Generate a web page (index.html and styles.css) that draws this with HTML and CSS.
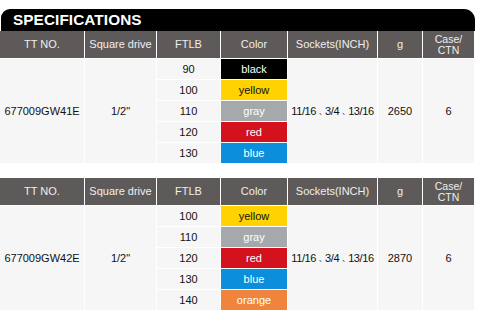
FILE: index.html
```html
<!DOCTYPE html>
<html>
<head>
<meta charset="utf-8">
<link rel="stylesheet" href="styles.css">
</head>
<body>
<div class="page">
  <div class="title">SPECIFICATIONS</div>
  <div class="spec">
    <div class="hd">TT NO.</div>
    <div class="hd">Square drive</div>
    <div class="hd">FTLB</div>
    <div class="hd">Color</div>
    <div class="hd">Sockets(INCH)</div>
    <div class="hd">g</div>
    <div class="hd two">Case/<br>CTN</div>

    <div class="cell span c1">677009GW41E</div>
    <div class="cell span c2">1/2"</div>
    <div class="cell span c5">11/16<span class="sep">、</span>3/4<span class="sep">、</span>13/16</div>
    <div class="cell span c6">2650</div>
    <div class="cell span c7">6</div>

    <div class="cell c3">90</div><div class="clr black">black</div>
    <div class="cell c3">100</div><div class="clr yellow">yellow</div>
    <div class="cell c3">110</div><div class="clr gray">gray</div>
    <div class="cell c3">120</div><div class="clr red">red</div>
    <div class="cell c3">130</div><div class="clr blue">blue</div>
  </div>

  <div class="spec second">
    <div class="hd">TT NO.</div>
    <div class="hd">Square drive</div>
    <div class="hd">FTLB</div>
    <div class="hd">Color</div>
    <div class="hd">Sockets(INCH)</div>
    <div class="hd">g</div>
    <div class="hd two">Case/<br>CTN</div>

    <div class="cell span c1">677009GW42E</div>
    <div class="cell span c2">1/2"</div>
    <div class="cell span c5">11/16<span class="sep">、</span>3/4<span class="sep">、</span>13/16</div>
    <div class="cell span c6">2870</div>
    <div class="cell span c7">6</div>

    <div class="cell c3">100</div><div class="clr yellow">yellow</div>
    <div class="cell c3">110</div><div class="clr gray">gray</div>
    <div class="cell c3">120</div><div class="clr red">red</div>
    <div class="cell c3">130</div><div class="clr blue">blue</div>
    <div class="cell c3">140</div><div class="clr orange">orange</div>
  </div>
</div>
</body>
</html>
```

FILE: styles.css
```css
html, body {
  margin: 0;
  padding: 0;
  background: #ffffff;
}

.page {
  padding-top: 9px;
  width: 479px;
  font-family: "Liberation Sans", Arial, sans-serif;
}

.title {
  margin-left: 1px;
  width: 474px;
  height: 22px;
  background: #000;
  border-radius: 9px 11px 0 0;
  color: #fff;
  font-weight: bold;
  font-size: 15.3px;
  line-height: 22px;
  padding-left: 12px;
  box-sizing: border-box;
  letter-spacing: 0.1px;
}

.spec {
  display: grid;
  width: 474px;
  grid-template-columns: 84px 71px 63px 66px 89px 44px 51px;
  grid-template-rows: 27px repeat(5, 20px);
  gap: 1px;
  background: #fff;
  font-size: 11px;
}

.spec.second {
  margin-top: 15px;
}

.hd {
  background: #5e5a59;
  color: #efefef;
  display: flex;
  align-items: center;
  justify-content: center;
  text-align: center;
  line-height: 11px;
}

.hd.two {
  font-size: 10.5px;
  line-height: 11px;
}

.cell {
  background: #f6f6f6;
  color: #111;
  display: flex;
  align-items: center;
  justify-content: center;
}

.span {
  grid-row: 2 / 7;
}

.c1 { grid-column: 1; }
.c2 { grid-column: 2; }
.c3 { grid-column: 3; }
.c5 { grid-column: 5; letter-spacing: -0.4px; }
.c6 { grid-column: 6; }
.c7 { grid-column: 7; }

.clr {
  grid-column: 4;
  display: flex;
  align-items: center;
  justify-content: center;
  color: #fff;
}

.sep {
  font-family: "Noto Sans CJK JP", sans-serif;
  font-size: 7px;
  letter-spacing: 0;
  margin: 0 -1px 0 3px;
  color: #333;
}

.black { background: #000; color: #fff; }
.yellow { background: #ffd200; color: #111; }
.gray { background: #a5a9ac; color: #fff; }
.red { background: #d4121e; color: #fff; }
.blue { background: #0b8edb; color: #fff; }
.orange { background: #f0843c; color: #fff; }
```
